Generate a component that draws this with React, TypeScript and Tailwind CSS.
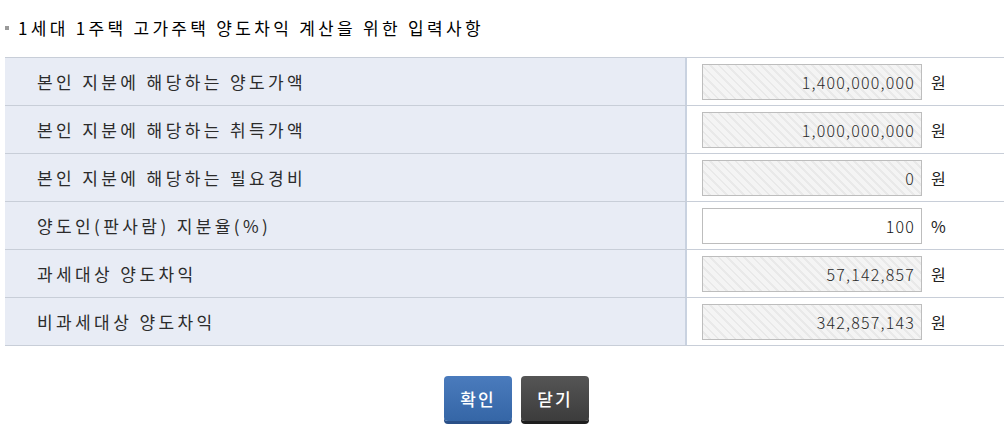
import React from 'react'

const rows: { label: string; value: string; unit: string; editable?: boolean }[] = [
    { label: '본인 지분에 해당하는 양도가액', value: '1,400,000,000', unit: '원' },
    { label: '본인 지분에 해당하는 취득가액', value: '1,000,000,000', unit: '원' },
    { label: '본인 지분에 해당하는 필요경비', value: '0', unit: '원' },
    { label: '양도인(판사람) 지분율(%)', value: '100', unit: '%', editable: true },
    { label: '과세대상 양도차익', value: '57,142,857', unit: '원' },
    { label: '비과세대상 양도차익', value: '342,857,143', unit: '원' },
]

const App: React.FC<{}> = () => {
    return (
        <div className="w-[1004px] h-[439px] bg-white font-['Noto_Sans_CJK_KR',sans-serif] text-[#333]">
            <div className="flex items-center h-[57px] pl-[5px] pb-[1px]">
                <span className="w-[4px] h-[4px] bg-[#9a9a9a] mr-[9px]"></span>
                <h2 className="text-[17px] text-black tracking-[3.3px]">1세대 1주택 고가주택 양도차익 계산을 위한 입력사항</h2>
            </div>
            <div className="ml-[5px] border-t border-[#c8ced8]">
                {rows.map((row) => (
                    <div key={row.label} className="flex h-[48px] border-b border-[#c8ced8]">
                        <div className="w-[682px] flex items-center pl-[32px] bg-[#e8ecf5] border-r-2 border-[#c9d2e0] text-[17px] tracking-[3.4px] text-[#2b2b2b]">
                            {row.label}
                        </div>
                        <div className="flex-1 flex items-center pl-[15px]">
                            <div
                                className={
                                    row.editable
                                        ? 'w-[220px] h-[36px] border border-[#bdbdbd] bg-white flex items-center justify-end pr-[6px] text-[16px] font-light tracking-[1.2px] text-[#111]'
                                        : 'w-[220px] h-[36px] border border-[#bdbdbd] bg-[repeating-linear-gradient(45deg,#f4f4f4_0px,#f4f4f4_4px,#e9e9e9_4px,#e9e9e9_6px)] flex items-center justify-end pr-[6px] text-[16px] font-light tracking-[1.2px] text-[#2a2a2a]'
                                }
                            >
                                {row.value}
                            </div>
                            <span className="ml-[9px] text-[16px] text-[#222]">{row.unit}</span>
                        </div>
                    </div>
                ))}
            </div>
            <div className="flex justify-center gap-[9px] pt-[30px] pl-[29px]">
                <button className="w-[68px] h-[45px] rounded-[4px] bg-[linear-gradient(#4a7bbd,#3566a6)] shadow-[0_3px_0_#2a5088] text-white text-[17px] font-medium tracking-[2px]">
                    확인
                </button>
                <button className="w-[68px] h-[45px] rounded-[4px] bg-[linear-gradient(#555,#3c3c3c)] shadow-[0_3px_0_#1e1e1e] text-white text-[17px] font-medium tracking-[2px]">
                    닫기
                </button>
            </div>
        </div>
    )
}

export default App
